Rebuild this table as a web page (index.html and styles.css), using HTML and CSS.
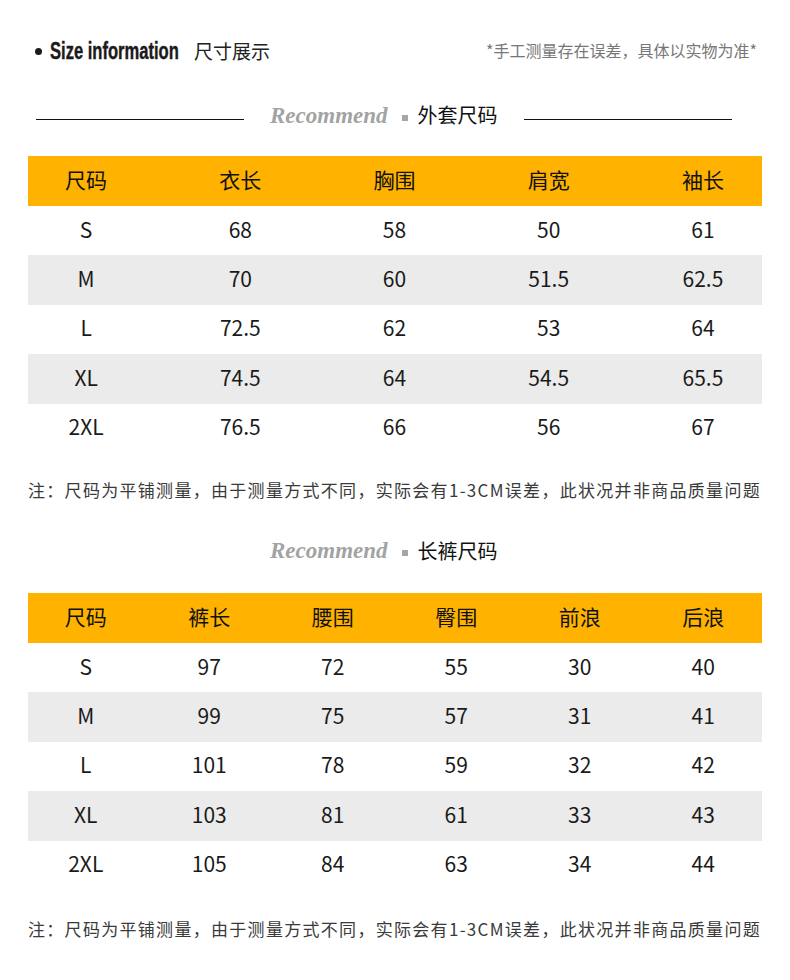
FILE: index.html
```html
<!DOCTYPE html>
<html lang="zh-CN">
<head>
<meta charset="utf-8">
<title>尺寸展示</title>
<link rel="stylesheet" href="styles.css">
</head>
<body>
<div class="page">
  <div class="top">
    <div class="top-left">
      <span class="dot"></span>
      <span class="en-title">Size information</span>
      <span class="cn-title">尺寸展示</span>
    </div>
    <div class="top-note">*手工测量存在误差，具体以实物为准*</div>
  </div>

  <div class="rec">
    <span class="rule"></span>
    <div class="rec-mid">
      <span class="rec-en">Recommend</span>
      <span class="sq"></span>
      <span class="rec-cn">外套尺码</span>
    </div>
    <span class="rule"></span>
  </div>

  <div class="table t5">
    <div class="tr head"><div class="cells"><div>尺码</div><div>衣长</div><div>胸围</div><div>肩宽</div><div>袖长</div></div></div>
    <div class="tr"><div class="cells"><div>S</div><div>68</div><div>58</div><div>50</div><div>61</div></div></div>
    <div class="tr alt"><div class="cells"><div>M</div><div>70</div><div>60</div><div>51.5</div><div>62.5</div></div></div>
    <div class="tr"><div class="cells"><div>L</div><div>72.5</div><div>62</div><div>53</div><div>64</div></div></div>
    <div class="tr alt"><div class="cells"><div>XL</div><div>74.5</div><div>64</div><div>54.5</div><div>65.5</div></div></div>
    <div class="tr"><div class="cells"><div>2XL</div><div>76.5</div><div>66</div><div>56</div><div>67</div></div></div>
  </div>

  <p class="note">注：尺码为平铺测量，由于测量方式不同，实际会有1-3CM误差，此状况并非商品质量问题</p>

  <div class="rec rec-2">
    <span class="rule"></span>
    <div class="rec-mid">
      <span class="rec-en">Recommend</span>
      <span class="sq"></span>
      <span class="rec-cn">长裤尺码</span>
    </div>
    <span class="rule"></span>
  </div>

  <div class="table t6">
    <div class="tr head"><div class="cells"><div>尺码</div><div>裤长</div><div>腰围</div><div>臀围</div><div>前浪</div><div>后浪</div></div></div>
    <div class="tr"><div class="cells"><div>S</div><div>97</div><div>72</div><div>55</div><div>30</div><div>40</div></div></div>
    <div class="tr alt"><div class="cells"><div>M</div><div>99</div><div>75</div><div>57</div><div>31</div><div>41</div></div></div>
    <div class="tr"><div class="cells"><div>L</div><div>101</div><div>78</div><div>59</div><div>32</div><div>42</div></div></div>
    <div class="tr alt"><div class="cells"><div>XL</div><div>103</div><div>81</div><div>61</div><div>33</div><div>43</div></div></div>
    <div class="tr"><div class="cells"><div>2XL</div><div>105</div><div>84</div><div>63</div><div>34</div><div>44</div></div></div>
  </div>

  <p class="note note-2">注：尺码为平铺测量，由于测量方式不同，实际会有1-3CM误差，此状况并非商品质量问题</p>
</div>
</body>
</html>
```

FILE: styles.css
```css
* { box-sizing: border-box; }
html, body { margin: 0; padding: 0; background: #fff; }
body {
  font-family: "Noto Sans CJK SC", "Noto Sans", sans-serif;
  color: #1a1a1a;
  width: 790px;
}
.page { padding: 30px 28px 0 28px; }

.top {
  height: 40px;
  display: flex;
  align-items: center;
  justify-content: space-between;
}
.top-left { display: flex; align-items: center; padding-left: 7px; }
.dot {
  width: 7px; height: 7px; border-radius: 50%;
  background: #1a1a1a;
  margin-right: 8px;
  margin-top: 2px;
}
.en-title {
  display: inline-block;
  font-family: "Liberation Sans", Arial, sans-serif;
  font-weight: bold;
  font-size: 23px;
  line-height: 1;
  color: #1a1a1a;
  transform: scaleX(0.72);
  transform-origin: left center;
  margin-right: -50px;
  margin-top: 2px;
  -webkit-text-stroke: 0.4px #1a1a1a;
}
.cn-title {
  font-size: 19px;
  margin-left: 15px;
  color: #222;
  line-height: 1;
}
.top-note {
  font-size: 16px;
  color: #777;
  margin-right: 5px;
  line-height: 1;
}

.rec {
  margin: 25px 0 0 8px;
  width: 696px;
  height: 40px;
  display: flex;
  align-items: center;
}
.rule {
  width: 208px;
  height: 1px;
  background: #111;
  margin-top: 8px;
}
.rec-2 .rule { background: transparent; }
.rec-mid {
  flex: 1;
  display: flex;
  align-items: center;
  padding-left: 26px;
}
.rec-en {
  font-family: "Liberation Serif", "DejaVu Serif", serif;
  font-style: italic;
  font-weight: bold;
  font-size: 23px;
  color: #a3a3a3;
  line-height: 1;
}
.sq {
  width: 6px; height: 6px;
  background: #a6a6a6;
  margin-left: 14px;
  margin-top: 5px;
}
.rec-cn {
  font-size: 20px;
  color: #111;
  margin-left: 10px;
  line-height: 1;
}

.table { margin-top: 21px; width: 734px; }
.tr { height: 49.4px; }
.tr.head { height: 50px; background: #ffb300; color: #111; }
.tr.alt { background: #ebebeb; }
.cells {
  display: grid;
  height: 100%;
  align-items: center;
  justify-items: center;
  font-size: 21px;
  line-height: 1;
  padding-bottom: 3px;
}
.t5 .cells {
  grid-template-columns: repeat(5, 1fr);
  margin: 0 -18px 0 -19px;
}
.t6 .cells {
  grid-template-columns: repeat(6, 1fr);
  margin: 0 -3px 0 -4px;
}

.note {
  margin: 25px 0 0 0;
  font-size: 17px;
  line-height: 24px;
  letter-spacing: 1.3px;
  color: #3a3a3a;
  white-space: nowrap;
}
.rec-2 { margin-top: 29px; }
.t6 { margin-top: 22px; }
.note-2 { margin-top: 27px; }
```
